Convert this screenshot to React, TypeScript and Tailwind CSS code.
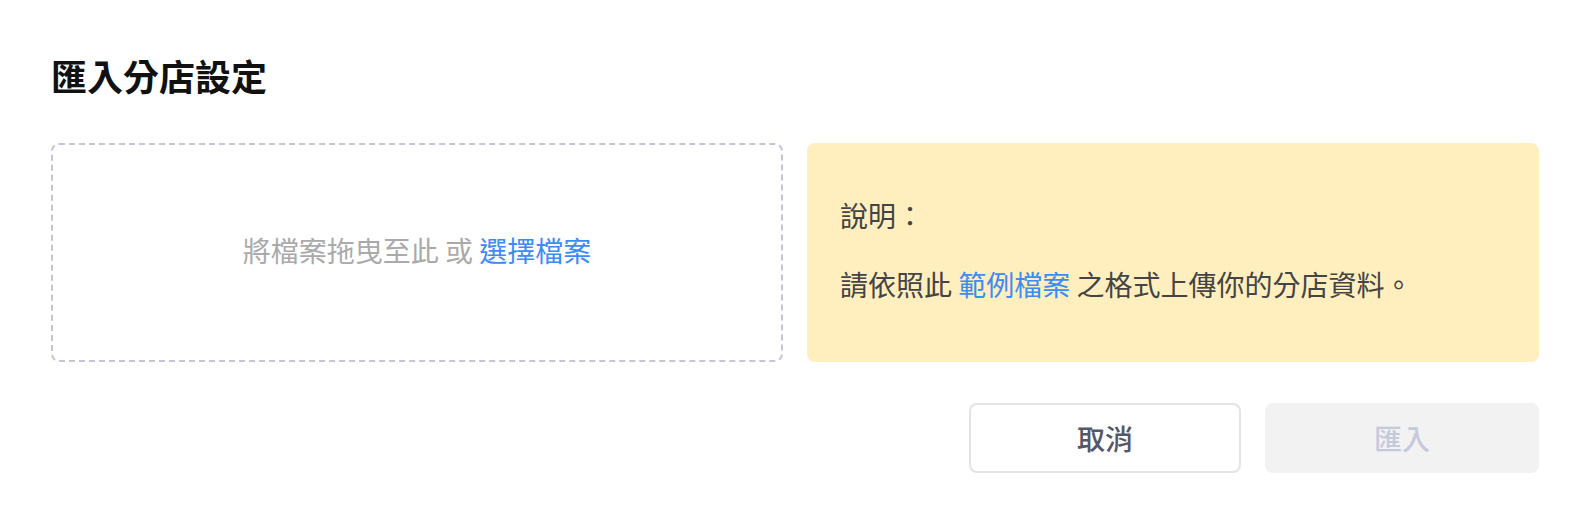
import React from 'react'

const FONT = '[font-family:"Noto_Sans_CJK_TC","Noto_Sans",sans-serif]'

export default function App() {
  return (
    <div className={`w-[1590px] h-[510px] bg-white px-[51px] pt-[48px] ${FONT}`}>
      <h1 className="text-[36px] leading-[54px] font-bold text-[#111111]">匯入分店設定</h1>

      {/* Upload + notes */}
      <div className="mt-[41px] grid h-[219px] grid-cols-2 gap-6">
        <div className="flex items-center justify-center rounded-lg border-2 border-dashed border-[#c4c5d8] pb-[5px]">
          <p className="text-[28px] leading-[42px] text-[#aaaaaa]">
            將檔案拖曳至此 或 <span className="cursor-pointer text-[#3d8bf7]">選擇檔案</span>
          </p>
        </div>
        <div className="flex flex-col justify-center gap-[27px] rounded-lg bg-[#ffefbf] pb-[7px] pl-[33px] text-[28px] leading-[42px] text-[#444444]">
          <p>說明：</p>
          <p>
            請依照此 <span className="cursor-pointer text-[#3d8bf7]">範例檔案</span> 之格式上傳你的分店資料。
          </p>
        </div>
      </div>

      {/* Actions */}
      <div className="mt-[41px] flex justify-end gap-6">
        <button className="flex h-[70px] w-[272px] items-center justify-center rounded-lg border-2 border-[#e4e4e7] bg-white text-[28px] font-medium text-[#545866]">
          取消
        </button>
        <button
          disabled
          className="flex h-[70px] w-[274px] items-center justify-center rounded-lg bg-[#f2f2f3] text-[28px] font-medium text-[#c6c9dc]"
        >
          匯入
        </button>
      </div>
    </div>
  )
}
